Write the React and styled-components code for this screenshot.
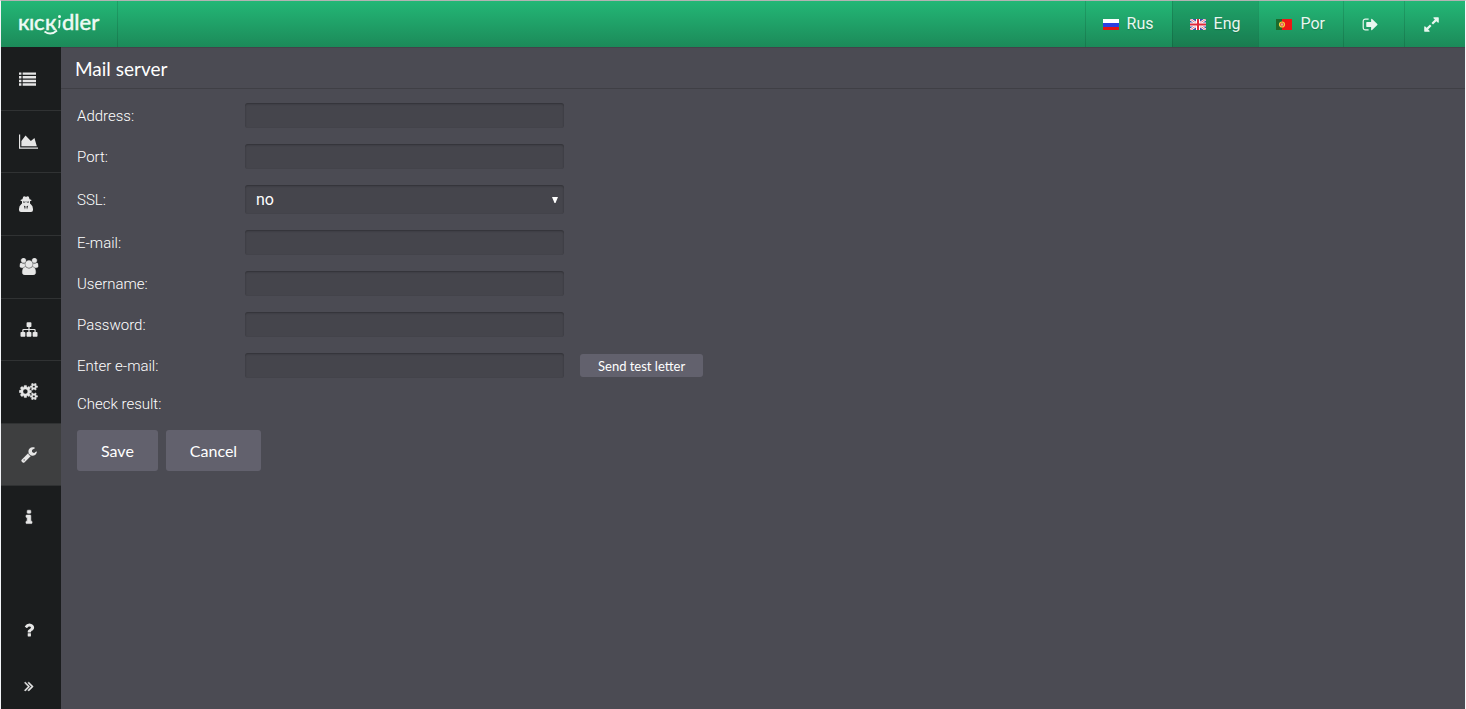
import React from "react";
import styled, { createGlobalStyle } from "styled-components";

const GlobalStyle = createGlobalStyle`
  * {
    box-sizing: border-box;
  }

  body {
    margin: 0;
    background: #4b4b53;
    color: #fff;
    font-family: Roboto, sans-serif;
  }
`;

const Page = styled.div`
  display: flex;
  flex-direction: column;
  min-height: 100vh;
  border: solid #f4f5f8;
  border-width: 1px 1px 0;
  border-top-color: #b3b3b3;
`;

const Header = styled.header`
  display: flex;
  justify-content: space-between;
  height: 46px;
  background: linear-gradient(#23b776, #1c8a59);
`;

const Brand = styled.a`
  display: block;
  width: 117px;
  border-right: 1px solid rgba(0, 0, 0, 0.12);
`;

const HeaderNav = styled.nav`
  display: flex;
`;

const HeaderButton = styled.button`
  display: flex;
  align-items: center;
  justify-content: center;
  gap: 8px;
  min-width: 61px;
  padding: 0 8px 0 0;
  border: 0;
  border-left: 1px solid rgba(0, 0, 0, 0.12);
  background: ${(props) => (props.$active ? "rgba(0, 0, 0, 0.1)" : "none")};
  color: #e9f7f0;
  font: 400 16px/20px Roboto, sans-serif;
  text-shadow: 0 1px 1px rgba(0, 0, 0, 0.2);
`;

const HeaderLang = styled(HeaderButton)`
  padding: 0 18px 0 17px;
`;

const Body = styled.div`
  display: flex;
  flex: 1;
`;

const Sidebar = styled.aside`
  display: flex;
  flex-direction: column;
  justify-content: space-between;
  width: 60px;
  background: #1b1d1e;
`;

const SideMenu = styled.nav`
  display: grid;
  grid-auto-rows: 1fr;
  height: 501px;
`;

const SideFooter = styled.div`
  display: grid;
  gap: 10px;
`;

const SideLink = styled.a`
  display: flex;
  align-items: center;
  padding-left: 18px;
  min-height: 46px;
  border-top: ${(props) => (props.$line ? "1px solid #303233" : "0")};
  background: ${(props) => (props.$active ? "#3e3f40" : "none")};
  color: #e6e6e6;
`;

const Main = styled.main`
  flex: 1;
`;

const Title = styled.h1`
  margin: 0;
  padding: 0 14px;
  height: 42px;
  border-top: 1px solid #43434a;
  border-bottom: 1px solid #3f3f45;
  font: 400 19px/42px Lato, sans-serif;
`;

const Form = styled.form`
  display: flex;
  flex-direction: column;
  gap: 16px;
  padding: 14px 16px;
`;

const Row = styled.div`
  display: grid;
  grid-template-columns: 152px 319px auto;
  justify-content: start;
  align-items: center;
  column-gap: 16px;
`;

const Label = styled.label`
  font: 300 15px/18px Roboto, sans-serif;
`;

const Input = styled.input`
  width: 100%;
  height: 25px;
  padding: 0 11px;
  border: 0;
  border-radius: 3px;
  background: #45454c;
  box-shadow: inset 0 1px 2px rgba(0, 0, 0, 0.3);
  color: #fff;
  font: 400 16px/20px Roboto, sans-serif;
`;

const SelectBox = styled.div`
  position: relative;

  svg {
    position: absolute;
    top: 12px;
    right: 6px;
    pointer-events: none;
  }
`;

const Select = styled(Input)`
  display: block;
  height: 29px;
  appearance: none;
`;

const Button = styled.button`
  height: ${(props) => (props.$small ? "23px" : "41px")};
  padding: 0 ${(props) => (props.$small ? "18px" : "24px")};
  border: 0;
  border-radius: 3px;
  background: #62616d;
  color: #fff;
  font: 400 ${(props) => (props.$small ? "13px" : "16px")} / 20px Lato, sans-serif;
`;

const Result = styled.output`
  font: 300 15px/20px Roboto, sans-serif;
`;

const Actions = styled.div`
  display: flex;
  gap: 8px;
`;

const GEAR_SMALL =
  "v140q0 16-149 31-12 27-30 52 51 113 51 138 0 4-4 7-122 71-124 71-8 0-46-47t-52-68q-20 2-30 2t-30-2q-14 21-52 68t-46 47q-2 0-124-71-4-3-4-7 0-25 51-138-18-25-30-52-149-15-149-31v-140q0-16 149-31 13-29 30-52-51-113-51-138 0-4 4-7 4-2 35-20t59-34 30-16q8 0 46 46.5t52 67.5q20-2 30-2t30 2q51-71 92-112l6-2q4 0 124 70 4 3 4 7 0 25-51 138 17 23 30 52 149 15 149 31z";

const ICONS = {
  list: {
    box: "0 0 1792 1792",
    d: "M0 256h256v256h-256zM384 256h1408v256h-1408zM0 640h256v256h-256zM384 640h1408v256h-1408zM0 1024h256v256h-256zM384 1024h1408v256h-1408zM0 1408h256v256h-256zM384 1408h1408v256h-1408z",
  },
  chart: {
    box: "0 0 2048 1792",
    d: "M2048 1536v128h-2048v-1536h128v1408h1920zM1664 512l256 896h-1664v-576l448-576 576 576z",
  },
  secret: {
    box: "0 0 14 16",
    d: "M4.2 .8Q5 0 6 .6Q7 1.1 8 .6Q9 0 9.8 .8L10.6 3.3Q12.6 3.6 12.6 4.3Q12.6 4.9 11 5.3V7.4L11.8 8.2Q14 9.8 14 13V14Q14 16 12 16H2Q0 16 0 14V13Q0 9.8 2.2 8.2L3 7.4V5.3Q1.4 4.9 1.4 4.3Q1.4 3.6 3.4 3.3ZM4 5.6V6.4Q5.8 7 6.6 5.9H7.4Q8.2 7 10 6.4V5.6Q7 6 4 5.6ZM4.8 9.4L6 13.6L6.6 10.4ZM9.2 9.4L8 13.6L7.4 10.4Z",
  },
  users: {
    box: "-64 0 1920 1792",
    d: "M529 896q-162 5-265 128h-134q-82 0-138-40.5t-56-118.5q0-353 124-353 6 0 43.5 21t97.5 42.5 119 21.5q67 0 133-23-5 37-5 66 0 139 81 256zm1071 637q0 120-73 189.5t-194 69.5h-874q-121 0-194-69.5t-73-189.5q0-53 3.5-103.5t14-109 26.5-108.5 43-97.5 62-81 85.5-53.5 111.5-20q10 0 43 21.5t73 48 107 48 135 21.5 135-21.5 107-48 73-48 43-21.5q61 0 111.5 20t85.5 53.5 62 81 43 97.5 26.5 108.5 14 109 3.5 103.5zm-1024-1277q0 106-75 181t-181 75-181-75-75-181 75-181 181-75 181 75 75 181zm704 384q0 159-112.5 271.5t-271.5 112.5-271.5-112.5-112.5-271.5 112.5-271.5 271.5-112.5 271.5 112.5 112.5 271.5zm576 225q0 78-56 118.5t-138 40.5h-134q-103-123-265-128 81-117 81-256 0-29-5-66 66 23 133 23 59 0 119-21.5t97.5-42.5 43.5-21q124 0 124 353zm-128-609q0 106-75 181t-181 75-181-75-75-181 75-181 181-75 181 75 75 181z",
    stroke: 40,
  },
  sitemap: {
    box: "0 0 1792 1792",
    d: "M1792 1248v320q0 40-28 68t-68 28h-320q-40 0-68-28t-28-68v-320q0-40 28-68t68-28h96v-192h-512v192h96q40 0 68 28t28 68v320q0 40-28 68t-68 28h-320q-40 0-68-28t-28-68v-320q0-40 28-68t68-28h96v-192h-512v192h96q40 0 68 28t28 68v320q0 40-28 68t-68 28h-320q-40 0-68-28t-28-68v-320q0-40 28-68t68-28h96v-192q0-52 38-90t90-38h512v-192h-96q-40 0-68-28t-28-68v-320q0-40 28-68t68-28h320q40 0 68 28t28 68v320q0 40-28 68t-68 28h-96v192h512q52 0 90 38t38 90v192h96q40 0 68 28t28 68z",
  },
  cogs: {
    box: "0 0 1920 1792",
    d:
      "M832 896q0-106-75-181t-181-75-181 75-75 181 75 181 181 75 181-75 75-181zm768 512q0-52-38-90t-90-38-90 38-38 90q0 53 37.5 90.5t90.5 37.5 90.5-37.5 37.5-90.5zm0-1024q0-52-38-90t-90-38-90 38-38 90q0 53 37.5 90.5t90.5 37.5 90.5-37.5 37.5-90.5zm-384 421v185q0 10-7 19.5t-16 10.5l-155 24q-11 35-32 76 34 48 90 115 7 11 7 20 0 12-7 19-23 30-82.5 89.5t-78.5 59.5q-11 0-21-7l-115-90q-37 19-77 31-11 108-23 155-7 24-30 24h-186q-11 0-20-7.5t-10-17.5l-23-153q-34-10-75-31l-118 89q-7 7-20 7-11 0-21-8-144-133-144-160 0-9 7-19 10-14 41-53t47-61q-23-44-35-82l-152-24q-10-1-17-9.5t-7-19.5v-185q0-10 7-19.5t16-10.5l155-24q11-35 32-76-34-48-90-115-7-11-7-20 0-12 7-20 22-30 82-89t79-59q11 0 21 7l115 90q34-18 77-32 11-108 23-154 7-24 30-24h186q11 0 20 7.5t10 17.5l23 153q34 10 75 31l118-89q8-7 20-7 11 0 21 8 144 133 144 160 0 8-7 19-12 16-42 54t-45 60q23 48 34 82l152 23q10 2 17 10.5t7 19.5z" +
      `M1856 1338${GEAR_SMALL}M1856 314${GEAR_SMALL}`,
    stroke: 50,
  },
  wrench: {
    box: "0 0 1792 1792",
    d: "M448 1472q0-26-19-45t-45-19-45 19-19 45 19 45 45 19 45-19 19-45zm644-420l-682 682q-37 37-90 37-52 0-91-37l-106-108q-38-36-38-90 0-53 38-91l681-681q39 98 114.5 173.5t173.5 114.5zm634-435q0 39-23 106-47 134-164.5 217.5t-258.5 83.5q-185 0-316.5-131.5t-131.5-316.5 131.5-316.5 316.5-131.5q58 0 121.5 16.5t107.5 46.5q16 11 16 28t-16 28l-293 169v224l193 107q5-3 79-48.5t135.5-81 70.5-35.5q15 0 23.5 10t8.5 25z",
  },
  info: {
    box: "0 0 1792 1792",
    d: "M1216 1344v128q0 26-19 45t-45 19h-512q-26 0-45-19t-19-45v-128q0-26 19-45t45-19h64v-384h-64q-26 0-45-19t-19-45v-128q0-26 19-45t45-19h384q26 0 45 19t19 45v576h64q26 0 45 19t19 45zm-128-1152v192q0 26-19 45t-45 19h-256q-26 0-45-19t-19-45v-192q0-26 19-45t45-19h256q26 0 45 19t19 45z",
    stroke: 60,
  },
  question: {
    box: "0 0 1792 1792",
    d: "M1088 1256v240q0 16-12 28t-28 12h-240q-16 0-28-12t-12-28v-240q0-16 12-28t28-12h240q16 0 28 12t12 28zm316-600q0 54-15.5 101t-35 76.5-55 59.5-57.5 43.5-61 35.5q-41 23-68.5 65t-27.5 67q0 17-12 32.5t-28 15.5h-240q-15 0-25.5-18.5t-10.5-37.5v-45q0-83 65-156.5t143-108.5q59-27 84-56t25-76q0-42-46.5-74t-107.5-32q-65 0-108 29-35 25-107 115-13 16-31 16-12 0-25-8l-164-125q-13-10-15.5-25t5.5-28q160-266 464-266 80 0 161 31t146 83 106 127.5 41 158.5z",
  },
  expandMenu: {
    box: "0 0 1792 1792",
    d: "M979 960q0 13-10 23l-466 466q-10 10-23 10t-23-10l-50-50q-10-10-10-23t10-23l393-393-393-393q-10-10-10-23t10-23l50-50q10-10 23-10t23 10l466 466q10 10 10 23zm384 0q0 13-10 23l-466 466q-10 10-23 10t-23-10l-50-50q-10-10-10-23t10-23l393-393-393-393q-10-10-10-23t10-23l50-50q10-10 23-10t23 10l466 466q10 10 10 23z",
    stroke: 60,
  },
  signOut: {
    box: "0 0 1792 1792",
    d: "M704 1440q0 4 1 20t.5 26.5-3 23.5-10 19.5-20.5 6.5h-320q-119 0-203.5-84.5t-84.5-203.5v-704q0-119 84.5-203.5t203.5-84.5h320q13 0 22.5 9.5t9.5 22.5q0 4 1 20t.5 26.5-3 23.5-10 19.5-20.5 6.5h-320q-66 0-113 47t-47 113v704q0 66 47 113t113 47h312l11.5 1 11.5 3 8 5.5 7 9 2 13.5zm928-544q0 26-19 45l-544 544q-19 19-45 19t-45-19-19-45v-288h-448q-26 0-45-19t-19-45v-384q0-26 19-45t45-19h448v-288q0-26 19-45t45-19 45 19l544 544q19 19 19 45z",
  },
  expand: {
    box: "0 0 1792 1792",
    d: "M883 1056q0 13-10 23l-332 332 144 144q19 19 19 45t-19 45-45 19h-448q-26 0-45-19t-19-45v-448q0-26 19-45t45-19 45 19l144 144 332-332q10-10 23-10t23 10l114 114q10 10 10 23zm781-864v448q0 26-19 45t-45 19-45-19l-144-144-332 332q-10 10-23 10t-23-10l-114-114q-10-10-10-23t10-23l332-332-144-144q-19-19-19-45t19-45 45-19h448q26 0 45 19t19 45z",
  },
};

const Icon = ({ name, width = 20, height = 17 }) => (
  <svg width={width} height={height} viewBox={ICONS[name].box} aria-hidden="true">
    <path
      d={ICONS[name].d}
      fill="currentColor"
      fillRule="evenodd"
      stroke="currentColor"
      strokeWidth={ICONS[name].stroke || 0}
    />
  </svg>
);

const Logo = () => (
  <svg width="116" height="46" viewBox="0 0 116 46" aria-label="Kickidler">
    <g
      fill="#eefaf4"
      stroke="#eefaf4"
      strokeWidth="0.5"
      fontFamily="Lato, 'Noto Sans', sans-serif"
      fontSize="22"
    >
      <text x="17" y="29">к</text>
      <text x="28" y="29">ı</text>
      <text x="33" y="29">c</text>
      <text x="44" y="29">к</text>
      <text x="61" y="29">dler</text>
    </g>
    <circle cx="58.5" cy="15.5" r="1.5" fill="#eefaf4" />
    <path
      d="M58.5 19V24Q58.5 26 57.5 27M43.5 30.5Q50 35 56 29.5"
      fill="none"
      stroke="#eefaf4"
      strokeWidth="1.8"
    />
  </svg>
);

const FlagRus = () => (
  <svg width="16" height="11" viewBox="0 0 16 11">
    <path d="M0 0h16v4H0z" fill="#fff" />
    <path d="M0 4h16v4H0z" fill="#2b3fe0" />
    <path d="M0 8h16v3H0z" fill="#e01515" />
  </svg>
);

const FlagEng = () => (
  <svg width="16" height="11" viewBox="0 0 16 11">
    <path d="M0 0h16v11H0z" fill="#3d4fa5" />
    <path d="M0 0L16 11M16 0L0 11" stroke="#fff" strokeWidth="2.4" />
    <path d="M0 0L16 11M16 0L0 11" stroke="#e0505c" strokeWidth="0.8" />
    <path d="M8 0V11M0 5.5H16" stroke="#fff" strokeWidth="4" />
    <path d="M8 0V11M0 5.5H16" stroke="#de2a3c" strokeWidth="2" />
  </svg>
);

const FlagPor = () => (
  <svg width="16" height="11" viewBox="0 0 16 11">
    <path d="M0 0h16v11H0z" fill="#ee1616" />
    <path d="M0 0h6v11H0z" fill="#1d6b2c" />
    <circle cx="6" cy="5.5" r="2.5" fill="#e3483a" stroke="#f3d43c" strokeWidth="1.2" />
    <path d="M5.5 4.5h1v2h-1z" fill="#fff" />
  </svg>
);

const LANGUAGES = [
  { label: "Rus", Flag: FlagRus },
  { label: "Eng", Flag: FlagEng, active: true },
  { label: "Por", Flag: FlagPor },
];

const MENU = [
  { name: "list", title: "Summary", width: 17 },
  { name: "chart", title: "Reports", width: 19 },
  { name: "secret", title: "Violations", width: 14, height: 16 },
  { name: "users", title: "Employees" },
  { name: "sitemap", title: "Structure" },
  { name: "cogs", title: "Settings" },
  { name: "wrench", title: "Tools", active: true },
  { name: "info", title: "Info" },
];

const FOOTER_MENU = [
  { name: "question", title: "Help", height: 18 },
  { name: "expandMenu", title: "Expand menu", height: 16 },
];

const FIELDS = [
  { id: "address", label: "Address:" },
  { id: "port", label: "Port:" },
  { id: "ssl", label: "SSL:", options: ["no", "yes"] },
  { id: "email", label: "E-mail:", type: "email" },
  { id: "username", label: "Username:" },
  { id: "password", label: "Password:", type: "password" },
  { id: "test-email", label: "Enter e-mail:", type: "email", action: "Send test letter" },
];

class MailServerForm extends React.Component {
  renderControl({ id, options, type }) {
    if (!options) {
      return <Input id={id} type={type || "text"} />;
    }

    return (
      <SelectBox>
        <Select as="select" id={id}>
          {options.map((option) => (
            <option key={option}>{option}</option>
          ))}
        </Select>
        <svg width="6" height="6" viewBox="0 0 6 6">
          <path d="M0 0h6L3.5 6h-1z" fill="#fff" />
        </svg>
      </SelectBox>
    );
  }

  render() {
    return (
      <Form>
        {FIELDS.map((field) => (
          <Row key={field.id}>
            <Label htmlFor={field.id}>{field.label}</Label>
            {this.renderControl(field)}
            {field.action && (
              <Button type="button" $small>
                {field.action}
              </Button>
            )}
          </Row>
        ))}
        <Result>Check result:</Result>
        <Actions>
          <Button type="button">Save</Button>
          <Button type="button">Cancel</Button>
        </Actions>
      </Form>
    );
  }
}

export default function App() {
  return (
    <>
      <GlobalStyle />
      <Page>
        <Header>
          <Brand href="#">
            <Logo />
          </Brand>
          <HeaderNav>
            {LANGUAGES.map(({ label, Flag, active }) => (
              <HeaderLang key={label} $active={active}>
                <Flag />
                {label}
              </HeaderLang>
            ))}
            <HeaderButton aria-label="Sign out">
              <Icon name="signOut" width={17} />
            </HeaderButton>
            <HeaderButton aria-label="Full screen">
              <Icon name="expand" width={17} />
            </HeaderButton>
          </HeaderNav>
        </Header>
        <Body>
          <Sidebar>
            <SideMenu>
              {MENU.map(({ title, active, ...icon }, i) => (
                <SideLink
                  key={title}
                  href="#"
                  aria-label={title}
                  $active={active}
                  $line={i > 0}
                >
                  <Icon {...icon} />
                </SideLink>
              ))}
            </SideMenu>
            <SideFooter>
              {FOOTER_MENU.map(({ title, ...icon }) => (
                <SideLink key={title} href="#" aria-label={title}>
                  <Icon {...icon} />
                </SideLink>
              ))}
            </SideFooter>
          </Sidebar>
          <Main>
            <Title>Mail server</Title>
            <MailServerForm />
          </Main>
        </Body>
      </Page>
    </>
  );
}
